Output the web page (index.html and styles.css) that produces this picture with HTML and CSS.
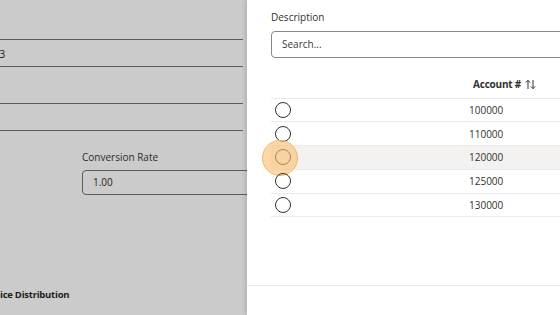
FILE: index.html
```html
<!DOCTYPE html>
<html lang="en">
<head>
<meta charset="UTF-8">
<meta name="viewport" content="width=device-width, initial-scale=1.0">
<title>Select Account</title>
<link rel="stylesheet" href="styles.css">
</head>
<body>
<div class="page">
  <div class="form-area">
    <div class="field-line field-first"><span class="field-text">3</span></div>
    <div class="field-line field-second"></div>
    <div class="rate-group">
      <div class="label">Conversion Rate</div>
      <div class="rate-input">1.00</div>
    </div>
    <div class="section-title">ice Distribution</div>
  </div>

  <div class="panel">
    <div class="panel-body">
      <div class="label">Description</div>
      <div class="search-box">Search...</div>

      <div class="grid">
        <div class="grid-head">
          <div class="col-check"></div>
          <div class="col-account head-cell">Account #
            <svg class="sort-icon" width="11" height="11" viewBox="0 0 11 11">
              <path d="M3 10V1.5M0.8 3.6L3 1.3L5.2 3.6" fill="none" stroke="#323130" stroke-width="1"/>
              <path d="M8 1v8.5M5.8 7.4L8 9.7L10.2 7.4" fill="none" stroke="#323130" stroke-width="1"/>
            </svg>
          </div>
        </div>
        <div class="grid-row"><div class="col-check"><span class="radio"></span></div><div class="col-account">100000</div></div>
        <div class="grid-row"><div class="col-check"><span class="radio"></span></div><div class="col-account">110000</div></div>
        <div class="grid-row row-hover"><div class="col-check"><span class="radio"></span><span class="click-mark"></span></div><div class="col-account">120000</div></div>
        <div class="grid-row"><div class="col-check"><span class="radio"></span></div><div class="col-account">125000</div></div>
        <div class="grid-row"><div class="col-check"><span class="radio"></span></div><div class="col-account">130000</div></div>
      </div>
    </div>
    <div class="panel-footer"></div>
  </div>
</div>
</body>
</html>
```
FILE: styles.css
```css
  body {
    margin: 0;
    font-family: "Open Sans", "Noto Sans", sans-serif;
    font-size: 10px;
    color: #323130;
  }
  .page {
    display: flex;
    width: 560px;
    height: 315px;
    overflow: hidden;
  }
  .form-area {
    width: 247px;
    flex-shrink: 0;
    background-color: #cbcbcb;
    color: #1d1d1d;
    overflow: hidden;
    padding-top: 39px;
    box-sizing: border-box;
  }
  .field-line {
    width: 243px;
    height: 26px;
    border-top: 1px solid #5c5c5c;
    border-bottom: 1px solid #5c5c5c;
    display: flex;
    align-items: center;
  }
  .field-second {
    margin-top: 36px;
  }
  .field-text {
    font-size: 11px;
    margin-left: -1px;
  }
  .rate-group {
    margin-top: 19px;
    margin-left: 82px;
  }
  .rate-group .label {
    color: #2b2b2b;
    margin-bottom: 6px;
  }
  .rate-input {
    width: 180px;
    height: 23px;
    border: 1px solid #5c5c5c;
    border-radius: 4px;
    padding-left: 10px;
    line-height: 23px;
  }
  .section-title {
    margin-top: 93px;
    font-weight: bold;
    font-size: 9.5px;
    letter-spacing: -0.25px;
    white-space: nowrap;
  }

  .panel {
    flex: 1;
    background-color: white;
    box-shadow: -2px 0 4px rgba(0, 0, 0, 0.12);
    display: flex;
    flex-direction: column;
  }
  .panel-body {
    height: 285px;
    padding-left: 24px;
    padding-top: 10px;
    box-sizing: border-box;
  }
  .label {
    line-height: 14px;
  }
  .search-box {
    margin-top: 7px;
    width: 300px;
    height: 25px;
    border: 1px solid #8a8886;
    border-radius: 4px;
    padding-left: 10px;
    line-height: 25px;
    color: #3b3a39;
  }
  .grid {
    margin-top: 12px;
    width: 289px;
  }
  .grid-head {
    display: flex;
    height: 27.5px;
    align-items: center;
    border-bottom: 1px solid #edebe9;
  }
  .head-cell {
    font-weight: bold;
    padding-left: 4px;
    display: flex;
    align-items: center;
    gap: 4px;
    letter-spacing: -0.2px;
  }
  .sort-icon {
    margin-top: 2px;
  }
  .grid-row {
    display: flex;
    align-items: center;
    height: 22.8px;
    border-bottom: 1px solid #edebe9;
  }
  .row-hover {
    background-color: #f3f2f1;
  }
  .col-check {
    width: 198px;
    position: relative;
    height: 100%;
    display: flex;
    align-items: center;
  }
  .radio {
    width: 14px;
    height: 14px;
    border: 1px solid #323130;
    border-radius: 50%;
    margin-left: 4px;
  }
  .click-mark {
    position: absolute;
    left: -9px;
    top: -6px;
    width: 34px;
    height: 34px;
    border: 1px solid #f2b66c;
    border-radius: 50%;
    background-color: rgba(250, 190, 110, 0.6);
  }
  .panel-footer {
    border-top: 1px solid #edebe9;
    flex: 1;
  }
```
